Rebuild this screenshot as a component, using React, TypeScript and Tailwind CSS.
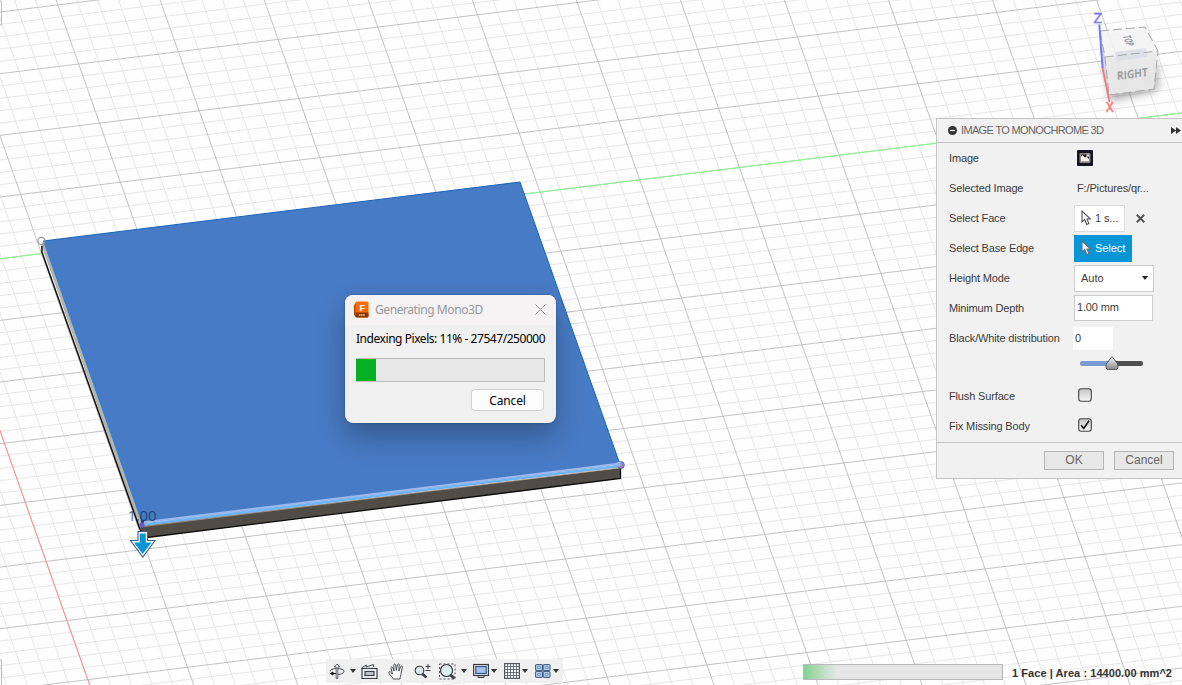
import type { ReactNode } from 'react';

const U = { x: 99.7, y: -12.3 };
const V = { x: 20.85, y: 59.1 };
const ORIGIN = { x: 78.7, y: 64 };
const AXIS_U = 3;
const AXIS_V = -2;

type Line = { key: string; x1: number; y1: number; x2: number; y2: number };

const at = (i: number, j: number) => ({
  x: ORIGIN.x + i * U.x + j * V.x,
  y: ORIGIN.y + i * U.y + j * V.y,
});

const span = (key: string, a: { x: number; y: number }, b: { x: number; y: number }): Line => ({
  key,
  x1: a.x,
  y1: a.y,
  x2: b.x,
  y2: b.y,
});

const minor: Line[] = [];
const major: Line[] = [];
for (let n = -25; n <= 70; n++) {
  const j = n / 5;
  (n % 5 === 0 ? major : minor).push(span('u' + n, at(-8, j), at(16, j)));
}
for (let n = -30; n <= 70; n++) {
  const i = n / 5;
  (n % 5 === 0 ? major : minor).push(span('v' + n, at(i, -6), at(i, 18)));
}
const axisG = span('g', at(-8, AXIS_U), at(16, AXIS_U));
const axisR = span('r', at(AXIS_V, -6), at(AXIS_V, 18));

function Lines({ items, color }: { items: Line[]; color: string }) {
  return (
    <g stroke={color} strokeWidth="1">
      {items.map(({ key, ...l }) => (
        <line key={key} {...l} />
      ))}
    </g>
  );
}

function Scene() {
  return (
    <svg className="absolute inset-0" width="1182" height="685" viewBox="0 0 1182 685">
      <defs>
        <filter id="soft" x="-50%" y="-50%" width="200%" height="200%">
          <feGaussianBlur stdDeviation="5" />
        </filter>
      </defs>
      <rect width="1182" height="685" fill="#fefefe" />
      <Lines items={minor} color="#e7e7e7" />
      <Lines items={major} color="#c3c3c3" />
      <Lines items={[axisR]} color="#ff9090" />
      <Lines items={[axisG]} color="#84fb84" />

      <path d="M0 1h1.5v24H0M0 660h1.5v25" fill="none" stroke="#bcbcbc" />

      <polygon points="41.5,245 43.3,240.7 141.7,522 141,531" fill="#a9aba7" />
      <polygon points="141,526 620.5,468 620.5,478.5 147,537.5 140,531" fill="#504d46" />
      <path d="M140.3 530L147 537.5L620.5 478.5V468" fill="none" stroke="#0c0c0c" strokeWidth="1.3" />
      <path d="M41.900 246V252L140 529.500" fill="none" stroke="#111" strokeWidth="1.500" />
      <path d="M43.8 247L141.300 526" stroke="#b3b6b1" strokeWidth="2" />
      <polygon points="43.3,241 520,182 619.7,463.5 141.7,522.5" fill="#487bc5" />
      <path d="M43.3 241L520 182L619.7 463.5" fill="none" stroke="#1763bd" strokeWidth="1" />
      <path d="M43.8 241L142 522" fill="none" stroke="#2a80dd" strokeWidth="1" />
      <path d="M142 522.6L620 463.6" stroke="#a0b8e8" strokeWidth="2" />
      <path d="M142 524.8L620 465.8" stroke="#72b4fb" strokeWidth="2.8" />
      <path d="M142 526.7L620 467.8" stroke="#b09c8a" strokeWidth="0.8" />
      <circle cx="41.5" cy="241" r="3.6" fill="none" stroke="#969696" strokeWidth="1.1" />
      <circle cx="620.8" cy="465" r="3.5" fill="#9a83bf" stroke="#654e87" strokeWidth=".8" />
      <path d="M617 462l4-.5v4.6l-4 .5z" fill="#91b7f2" />
      <text x="127.5" y="520.5" fontFamily="Open Sans, sans-serif" fontSize="15" textLength="29" fill="#0b2545" fillOpacity=".68">1.00</text>
      <circle cx="142" cy="525" r="2.600" fill="#685bc0" />
      <circle cx="142.5" cy="521.5" r="1.5" fill="#123a91" />
      <path d="M138 531.5h9.5v9h7.5l-12.2 16.6L130.5 540.5h7.5z" fill="#fff" stroke="#38618b" strokeWidth="1.1" />
      <path d="M139.7 533.5h6.1v9h5.7l-8.8 11.5l-8.7-11.5h5.7z" fill="#0696d7" />

      <polygon points="1107,66 1157,64 1158,90 1110,101" fill="#555" opacity=".5" filter="url(#soft)" />
      <polygon points="1100,31 1145,27 1158,51 1105,57" fill="#f2f2f2" fillOpacity=".88" />
      <polygon points="1105,57 1158,51 1154,89 1109,95" fill="#e9e9e9" fillOpacity=".95" />
      <polygon points="1100,31 1105,57 1109,95 1102,68" fill="#d4d4d8" fillOpacity=".9" />
      <polygon points="1115,52 1146,48 1147,57 1117,61" fill="#dde0e7" />
      <g fill="none" stroke="#a8a8a8" strokeWidth="1">
        <path d="M1100 31L1145 27L1158 51L1105 57Z" strokeDasharray="9 4" />
        <path d="M1105 57L1109 95L1154 89L1158 51" strokeDasharray="9 4" />
        <path d="M1100 31L1102 68L1109 95" strokeDasharray="6 3" />
      </g>
      <path d="M1099.3 24.5L1102.6 68" stroke="#7878f5" strokeWidth="2" />
      <path d="M1102.6 68L1109.5 102" stroke="#f37878" strokeWidth="1.7" />
      <g fontFamily="Liberation Sans, sans-serif" strokeWidth=".5">
        <text x="1093.5" y="22.800" fontSize="14" fill="#7a7af5" stroke="#7a7af5">Z</text>
        <text x="1105.8" y="112.3" fontSize="14" textLength="8" lengthAdjust="spacingAndGlyphs" fill="#f77b7b" stroke="#f77b7b">X</text>
      </g>
      <text transform="matrix(1,-.13,.03,1,1117,80)" fontFamily="Open Sans, sans-serif" fontWeight="700" fontSize="11.5" textLength="31" lengthAdjust="spacingAndGlyphs" fill="#9a9da2">RIGHT</text>
      <text transform="matrix(.38,.9,-1,.12,1122.500,36)" fontFamily="Open Sans, sans-serif" fontWeight="700" fontSize="11" textLength="11.500" lengthAdjust="spacingAndGlyphs" fill="#96999e">TOP</text>
    </svg>
  );
}

function Cursor({ fill, stroke }: { fill: string; stroke: string }) {
  return (
    <svg width="10" height="16" viewBox="0 0 10 16" className="shrink-0">
      <path d="M1 1v11l2.7-2.5L5.7 14.5l2.2-1L6 9h3.4z" fill={fill} stroke={stroke} strokeWidth="1.1" />
    </svg>
  );
}

function Row({ label, children }: { label: string; children: ReactNode }) {
  return (
    <div className="flex h-[30px] items-center">
      <div className="w-[125px] shrink-0 tracking-[-0.15px] whitespace-nowrap">{label}</div>
      {children}
    </div>
  );
}

function Check({ checked }: { checked?: boolean }) {
  return (
    <svg width="14" height="14" viewBox="0 0 14 14" className="ml-1 -mt-0.5">
      <defs>
        <linearGradient id="box" x1="0" y1="0" x2="0" y2="1">
          <stop offset="0" stopColor="#c4c4c4" />
          <stop offset="1" stopColor="#f6f6f6" />
        </linearGradient>
      </defs>
      <rect x=".7" y=".7" width="12.6" height="12.6" rx="2.5" fill="url(#box)" stroke="#444" strokeWidth="1.1" />
      {checked && <path d="M3.2 7.2l2.5 3.3L11 2.8" fill="none" stroke="#111" strokeWidth="1.5" />}
    </svg>
  );
}

function Panel() {
  return (
    <section className="absolute top-[118px] left-[936px] flex h-[361px] w-[246px] flex-col border border-r-0 border-[#c4c4c4] bg-[#f1f1f1] font-['Liberation_Sans',sans-serif] text-[11px] leading-[14px] text-[#3c3c3c]">
      <header className="flex h-6 shrink-0 items-center border-b border-[#c4c4c4] pl-[11px]">
        <svg width="9" height="9" viewBox="0 0 9 9">
          <circle cx="4.5" cy="4.5" r="4.5" fill="#333" />
          <path d="M2 4.5h5" stroke="#fff" strokeWidth="1.2" />
        </svg>
        <h1 className="mb-px ml-1 text-[11px] tracking-[-0.65px] whitespace-nowrap text-[#666]">IMAGE TO MONOCHROME 3D</h1>
        <svg width="10" height="7" viewBox="0 0 10 7" className="mr-[1px] ml-auto">
          <path d="M0 0l5 3.500L0 7zM5 0l5 3.500L5 7z" fill="#333" />
        </svg>
      </header>
      <div className="flex-1 pl-3">
        <Row label="Image">
          <svg width="16" height="16" viewBox="0 0 16 16" className="ml-[3px]">
            <rect width="16" height="16" rx="1" fill="#15151f" />
            <rect x="2.5" y="3" width="11" height="10" rx="1" fill="#8e8b82" />
            <rect x="4" y="4.5" width="8" height="7" fill="#14141e" />
            <path d="M4 11.5V6.5L5.500 5L8 7.500L9.500 6.500L12 9v2.500zM9.500 4.5h2.500V6.500H9.500z" fill="#f5f2e9" />
          </svg>
        </Row>
        <Row label="Selected Image"><span className="ml-[3px] tracking-[-0.14px]">F:/Pictures/qr...</span></Row>
        <Row label="Select Face">
          <button className="flex h-[27px] w-[51px] items-center gap-1 border border-[#dcdcdc] bg-white pl-1.5">
            <Cursor fill="#fff" stroke="#555" /><span className="tracking-[-0.1px]">1 s...</span>
          </button>
          <svg width="9" height="9" viewBox="0 0 9 9" className="ml-[11px]">
            <path d="M.8.8l7.400 7.400M8.200.8L.8 8.200" stroke="#555" strokeWidth="2" />
          </svg>
        </Row>
        <Row label="Select Base Edge">
          <button className="flex h-[27px] w-[58px] items-center gap-1 bg-[#0696d7] pl-[7px] text-white">
            <Cursor fill="#f4f4f4" stroke="#66717a" /><span className="tracking-[-0.05px]">Select</span>
          </button>
        </Row>
        <Row label="Height Mode">
          <button className="flex h-[27px] w-20 items-center justify-between border border-[#d0d0d0] bg-white pr-[5px] pl-1.5">
            <span>Auto</span>
            <svg width="6" height="4" viewBox="0 0 6 4"><path d="M0 0h6L3 4z" fill="#222" /></svg>
          </button>
        </Row>
        <Row label="Minimum Depth">
          <div className="flex h-[26px] w-[79px] items-center border border-[#ccc] bg-white pb-0.5 pl-0.5 tracking-[-0.15px]">1.00 mm</div>
        </Row>
        <Row label="Black/White distribution">
          <div className="-ml-px flex h-[23px] w-10 items-center bg-white pl-0.5">0</div>
        </Row>
        <div className="flex h-7 items-start pt-[3px] pl-[131px]">
          <svg width="64" height="16" viewBox="0 0 64 16">
            <defs>
              <linearGradient id="thumb" x1="0" y1="0" x2="0" y2="1">
                <stop offset="0" stopColor="#fff" />
                <stop offset="1" stopColor="#858585" />
              </linearGradient>
            </defs>
            <rect y="5" width="34" height="5" rx="2" fill="#7a99d5" />
            <rect x="34" y="5" width="29" height="5" rx="2" fill="#505050" />
            <path d="M32 .5L37.7 8Q39 13.500 35.5 13.500h-7Q25 13.500 26.3 8z" fill="url(#thumb)" stroke="#555" />
          </svg>
        </div>
        <Row label="Flush Surface"><Check /></Row>
        <Row label="Fix Missing Body"><Check checked /></Row>
      </div>
      <footer className="flex h-9 shrink-0 items-center justify-end gap-2.5 border-t border-[#c4c4c4] pr-2 text-xs text-[#666]">
        <button className="h-[19px] w-[60px] border border-[#b5b5b5] bg-[#e7e7e7] leading-[17px]">OK</button>
        <button className="h-[19px] w-[60px] border border-[#b5b5b5] bg-[#e7e7e7] leading-[17px]">Cancel</button>
      </footer>
    </section>
  );
}

function Dialog() {
  return (
    <section className="absolute top-[295px] left-[345px] flex h-32 w-[211px] flex-col overflow-hidden rounded-lg bg-[#f0f0f0] font-['Noto_Sans',sans-serif] text-xs text-black shadow-[0_14px_28px_rgba(0,0,0,0.28),0_0_2px_rgba(0,0,0,0.35)]">
      <header className="flex h-[30px] shrink-0 items-center bg-[#f4f2f3] pb-px pl-[9px] text-[#999]">
        <svg width="15" height="17" viewBox="0 0 15 17">
          <path d="M2 1.5L0 4v10l2 2z" fill="#b94a05" />
          <rect x="1.5" y=".5" width="13" height="16" rx="1.5" fill="#ff6b00" />
          <path d="M1.5 11.5h13V15q0 1.5-1.500 1.5H3q-1.500 0-1.500-1.500z" fill="#873900" />
          <text x="5.500" y="9.500" fontFamily="Liberation Sans, sans-serif" fontWeight="700" fontSize="9" fill="#fff">F</text>
          <path d="M5 14h6" stroke="#efcaae" strokeWidth="1.5" strokeDasharray="1.600 .5" />
        </svg>
        <h2 className="ml-1.5 pt-px tracking-[-0.42px] whitespace-nowrap">Generating Mono3D</h2>
        <svg width="11" height="11" viewBox="0 0 11 11" className="mr-[10px] ml-auto">
          <path d="M.5.5l10 10M10.5.5l-10 10" stroke="#8c8c8c" />
        </svg>
      </header>
      <div className="flex flex-1 flex-col pr-[11px] pl-[11px]">
        <p className="mt-[5px] leading-[18px] tracking-[-0.45px] whitespace-nowrap">Indexing Pixels: 11% - 27547/250000</p>
        <div className="mt-[10px] h-6 border border-[#bcbcbc] bg-[#e6e6e6]">
          <div className="-ml-px h-[22px] w-5 bg-[#06b025]" />
        </div>
        <button className="mt-[7px] mr-px h-[22px] w-[73px] self-end rounded border border-[#d0d0d0] bg-[#fdfdfd] pt-px leading-5 tracking-[-0.15px]">Cancel</button>
      </div>
    </section>
  );
}

function Caret({ className }: { className: string }) {
  return (
    <svg width="6" height="4" viewBox="0 0 6 4" className={className}>
      <path d="M0 0h6L3 4z" fill="#333" />
    </svg>
  );
}

function Toolbar() {
  return (
    <nav className="absolute top-[659px] left-[326px] flex h-6 w-[237px] items-center bg-[#f0f0f0] pl-[3px] text-[#383c44]">
      <svg width="16" height="16" viewBox="0 0 16 16" fill="none" stroke="currentColor">
        <path d="M8 11.5C13 11.5 15 9.5 15 8.200S12 5.500 8 5.500 1 7 1 8.200" />
        <path d="M1.500 10.500h6.500M4 9v3L1.500 10.500z" fill="currentColor" stroke="#111" />
        <path d="M7.200 15.500V4H5.500L8 1l2.500 3H8.800v11.500z" fill="#fff" strokeWidth=".8" />
      </svg>
      <Caret className="ml-[5px]" />
      <svg width="17" height="16" viewBox="0 0 17 16" fill="none" stroke="currentColor" className="ml-[5px]">
        <rect x="1" y="5.500" width="15" height="10" fill="#fafafa" strokeWidth="1.200" />
        <rect x="4" y="8.500" width="9" height="4" fill="#c5cbd3" strokeWidth="1.200" />
        <path d="M1 5.500V4.500L5.500 2l-.5 2L12.500 1.500V4" strokeWidth=".9" />
      </svg>
      <svg width="17" height="17" viewBox="0 0 17 17" fill="#fff" stroke="currentColor" strokeLinejoin="round" className="ml-[10px]">
        <path d="M5 16c0-1-1-2-2-3L.8 10c-.5-1 .8-1.700 1.600-1L4.500 11 3 5c-.2-1.300 1.200-1.600 1.600-.5L6 8 5.800 2c0-1.300 1.600-1.300 1.800 0L8.300 7.500 9.500 1.600c.3-1.200 1.800-.9 1.700.2L10.800 8l2-4.500c.5-1 1.800-.5 1.600.5L13 10.500c0 2-1 3-1 5.500z" strokeWidth=".9" />
      </svg>
      <svg width="17" height="16" viewBox="0 0 17 16" fill="none" stroke="currentColor" className="ml-[9px]">
        <path d="M8.500 11l4 3.500" strokeWidth="2.700" />
        <circle cx="5.500" cy="7.500" r="4.300" fill="#d9e8ea" strokeWidth="1.100" />
        <path d="M11.500 3.500h5M14 1v5M11.500 7.500h5" strokeWidth="1" />
      </svg>
      <svg width="17" height="17" viewBox="0 0 17 17" fill="none" stroke="currentColor" className="ml-[8px]">
        <rect x=".5" y="1" width="15.500" height="15" strokeDasharray="2 2" strokeWidth=".9" />
        <path d="M11 11.500l4.500 4" strokeWidth="3" />
        <circle cx="7.500" cy="7.500" r="6" fill="#dfedec" strokeWidth="1.200" />
      </svg>
      <Caret className="ml-[5px]" />
      <svg width="16" height="16" viewBox="0 0 16 16" fill="none" stroke="currentColor" className="ml-[6px]">
        <path d="M5 12.500v2h6v-2" fill="#ccc" />
        <rect x=".6" y="1.500" width="14.800" height="11" fill="#efefef" strokeWidth="1.200" />
        <rect x="2.800" y="3.500" width="10.400" height="7" fill="#a9c1e8" stroke="#34558e" strokeWidth="1.200" />
      </svg>
      <Caret className="ml-[2px]" />
      <svg width="16" height="16" viewBox="0 0 16 16" fill="none" stroke="#555861" className="ml-[7px]">
        <rect x=".6" y=".6" width="14.800" height="14.800" fill="#f6f6f6" strokeWidth="1.200" />
        <path d="M3.500 1v14M6.500 1v14M9.500 1v14M12.500 1v14M1 3.500h14M1 6.500h14M1 9.500h14M1 12.500h14" strokeWidth=".8" />
      </svg>
      <Caret className="ml-[2px]" />
      <svg width="16" height="14" viewBox="0 0 16 14" fill="#b6cdee" stroke="#3b5580" className="ml-[7px]">
        <rect x=".6" y=".6" width="6.800" height="6" rx=".5" />
        <rect x="8.200" y=".6" width="6.800" height="6" rx=".5" />
        <rect x=".6" y="7.400" width="6.800" height="6" rx=".5" />
        <rect x="8.200" y="7.400" width="6.800" height="6" rx=".5" />
        <path d="M2.500 2.500h3v2h-3zM10.100 2.500h3v2h-3zM2.500 9.400h3v2h-3zM10.100 9.400h3v2h-3z" stroke="#6c8dbd" strokeWidth=".7" />
      </svg>
      <Caret className="ml-[2px]" />
    </nav>
  );
}

function Status() {
  return (
    <div className="absolute top-[664px] left-[803px] flex h-4 items-start gap-[9px] font-['Liberation_Sans',sans-serif] text-[11px] font-bold text-[#333]">
      <div className="h-4 w-[200px] border border-[#b9b9b9] bg-[#e5e5e5]">
        <div className="h-full w-8 bg-gradient-to-r from-[#82cf91] to-[#e5e5e5]" />
      </div>
      <span className="mt-px leading-4 tracking-[0.06px] whitespace-nowrap">1 Face | Area : 14400.00 mm^2</span>
    </div>
  );
}

export default function App() {
  return (
    <main className="relative h-[685px] w-[1182px] overflow-hidden bg-white">
      <Scene />
      <Toolbar />
      <Status />
      <Panel />
      <Dialog />
    </main>
  );
}
